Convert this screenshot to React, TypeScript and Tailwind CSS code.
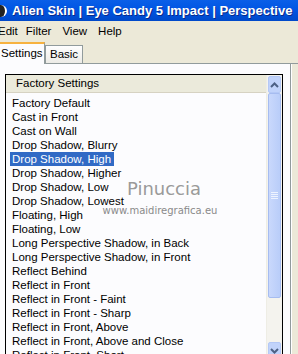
const items = [
  "Factory Default",
  "Cast in Front",
  "Cast on Wall",
  "Drop Shadow, Blurry",
  "Drop Shadow, High",
  "Drop Shadow, Higher",
  "Drop Shadow, Low",
  "Drop Shadow, Lowest",
  "Floating, High",
  "Floating, Low",
  "Long Perspective Shadow, in Back",
  "Long Perspective Shadow, in Front",
  "Reflect Behind",
  "Reflect in Front",
  "Reflect in Front - Faint",
  "Reflect in Front - Sharp",
  "Reflect in Front, Above",
  "Reflect in Front, Above and Close",
  "Reflect in Front, Short",
];

const selected = "Drop Shadow, High";

function Chevron({ up }: { up?: boolean }) {
  return (
    <svg width="9" height="6" viewBox="0 0 9 6">
      <path
        d={up ? "M1 5 L4.5 1.5 L8 5" : "M1 1 L4.5 4.5 L8 1"}
        fill="none"
        stroke="#4d6185"
        strokeWidth="2"
      />
    </svg>
  );
}

export default function App() {
  return (
    <div className="w-[298px] h-[354px] overflow-hidden bg-[#ece9d8] flex flex-col font-['Liberation_Sans',sans-serif] text-black">
      {/* title bar */}
      <div className="h-[21px] shrink-0 flex items-center bg-gradient-to-b from-[#0a5fe8] via-[#0054e3] to-[#0049c9] whitespace-nowrap overflow-hidden">
        <div className="w-[9px] h-[12px] -ml-[2px] shrink-0 rounded-r-full bg-[#222] border-r-2 border-white" />
        <span className="ml-[5px] text-white font-bold text-[13px] [text-shadow:1px_1px_0_#0a2a8a]">
          Alien Skin | Eye Candy 5 Impact | Perspective
        </span>
      </div>

      {/* menu bar */}
      <div className="h-[20px] shrink-0 flex items-center text-[11.5px] whitespace-nowrap pt-px">
        <span className="-ml-[2px]">Edit</span>
        <span className="ml-[8px]">Filter</span>
        <span className="ml-[11px]">View</span>
        <span className="ml-[11px]">Help</span>
      </div>

      {/* tabs */}
      <div className="h-[23px] shrink-0 flex items-end pt-[2px] border-b border-[#919b9c]">
        <div className="h-[22px] w-[45px] -mb-px bg-[#fcfcfe] border-t-2 border-[#f7b23f] border-r border-r-[#919b9c] flex items-center pl-[1px] text-[11.5px] relative z-10">
          Settings
        </div>
        <div className="h-[18px] w-[38px] bg-gradient-to-b from-[#fefefe] to-[#ecebe6] border border-b-0 border-[#919b9c] flex items-center pl-[4px] text-[11.5px]">
          Basic
        </div>
      </div>

      {/* panel */}
      <div className="flex-1 flex bg-[#fcfcfe] min-h-0">
        <div className="flex-1 pl-[5px] pt-[10px] min-h-0 border-r border-[#919b9c]">
          <div className="w-[278px] border border-black flex relative">
            <div className="flex-1 flex flex-col min-w-0">
              <div className="h-[18px] shrink-0 bg-[#ebeadb] border-b border-[#d6d2c2] flex items-center pl-[10px] text-[11.5px]">
                Factory Settings
              </div>
              <div className="flex flex-col pt-[3px] pl-[4px]">
                {items.map((item) => (
                  <div key={item} className="h-[14px] flex items-center whitespace-nowrap text-[11.5px] leading-[14px]">
                    <span
                      className={
                        item === selected
                          ? "bg-[#316ac5] text-white pl-[2px] pr-[3px]"
                          : "pl-[2px]"
                      }
                    >
                      {item}
                    </span>
                  </div>
                ))}
              </div>
            </div>

            {/* scrollbar */}
            <div className="w-[16px] shrink-0 flex flex-col bg-[#f4f3ee] border-l border-[#eeede5]">
              <div className="h-[17px] shrink-0 m-px mb-0 rounded-[2px] bg-[#c1d3fb] border border-[#b4c8f6] flex items-center justify-center">
                <Chevron up />
              </div>
              <div className="h-[205px] shrink-0 mx-px rounded-[2px] bg-gradient-to-r from-[#c9d8fc] to-[#b9cdf9] border border-[#a6bcf0] flex items-center justify-center">
                <div className="flex flex-col gap-[1px]">
                  <div className="w-[7px] h-px bg-[#eef3ff]" />
                  <div className="w-[7px] h-px bg-[#eef3ff]" />
                  <div className="w-[7px] h-px bg-[#eef3ff]" />
                  <div className="w-[7px] h-px bg-[#eef3ff]" />
                </div>
              </div>
              <div className="h-[44px] shrink-0" />
              <div className="h-[17px] shrink-0 mx-px rounded-[2px] bg-[#c1d3fb] border border-[#b4c8f6] flex items-center justify-center">
                <Chevron />
              </div>
            </div>

            {/* watermark */}
            <div className="absolute left-[92px] top-[104px] w-[124px] flex flex-col items-center pointer-events-none">
              <span className="ml-[8px] text-[18px] leading-[20px] text-[#9a9a9a] font-['DejaVu_Sans',sans-serif] [text-shadow:1px_1px_0_#ffffff]">
                Pinuccia
              </span>
              <span className="mt-[6px] text-[10px] leading-[12px] text-[#8a8a8a] font-['DejaVu_Sans',sans-serif]">
                www.maidiregrafica.eu
              </span>
            </div>
          </div>
        </div>
        <div className="w-[7px] shrink-0 bg-[#ece9d8] border-l border-white" />
      </div>
    </div>
  );
}
